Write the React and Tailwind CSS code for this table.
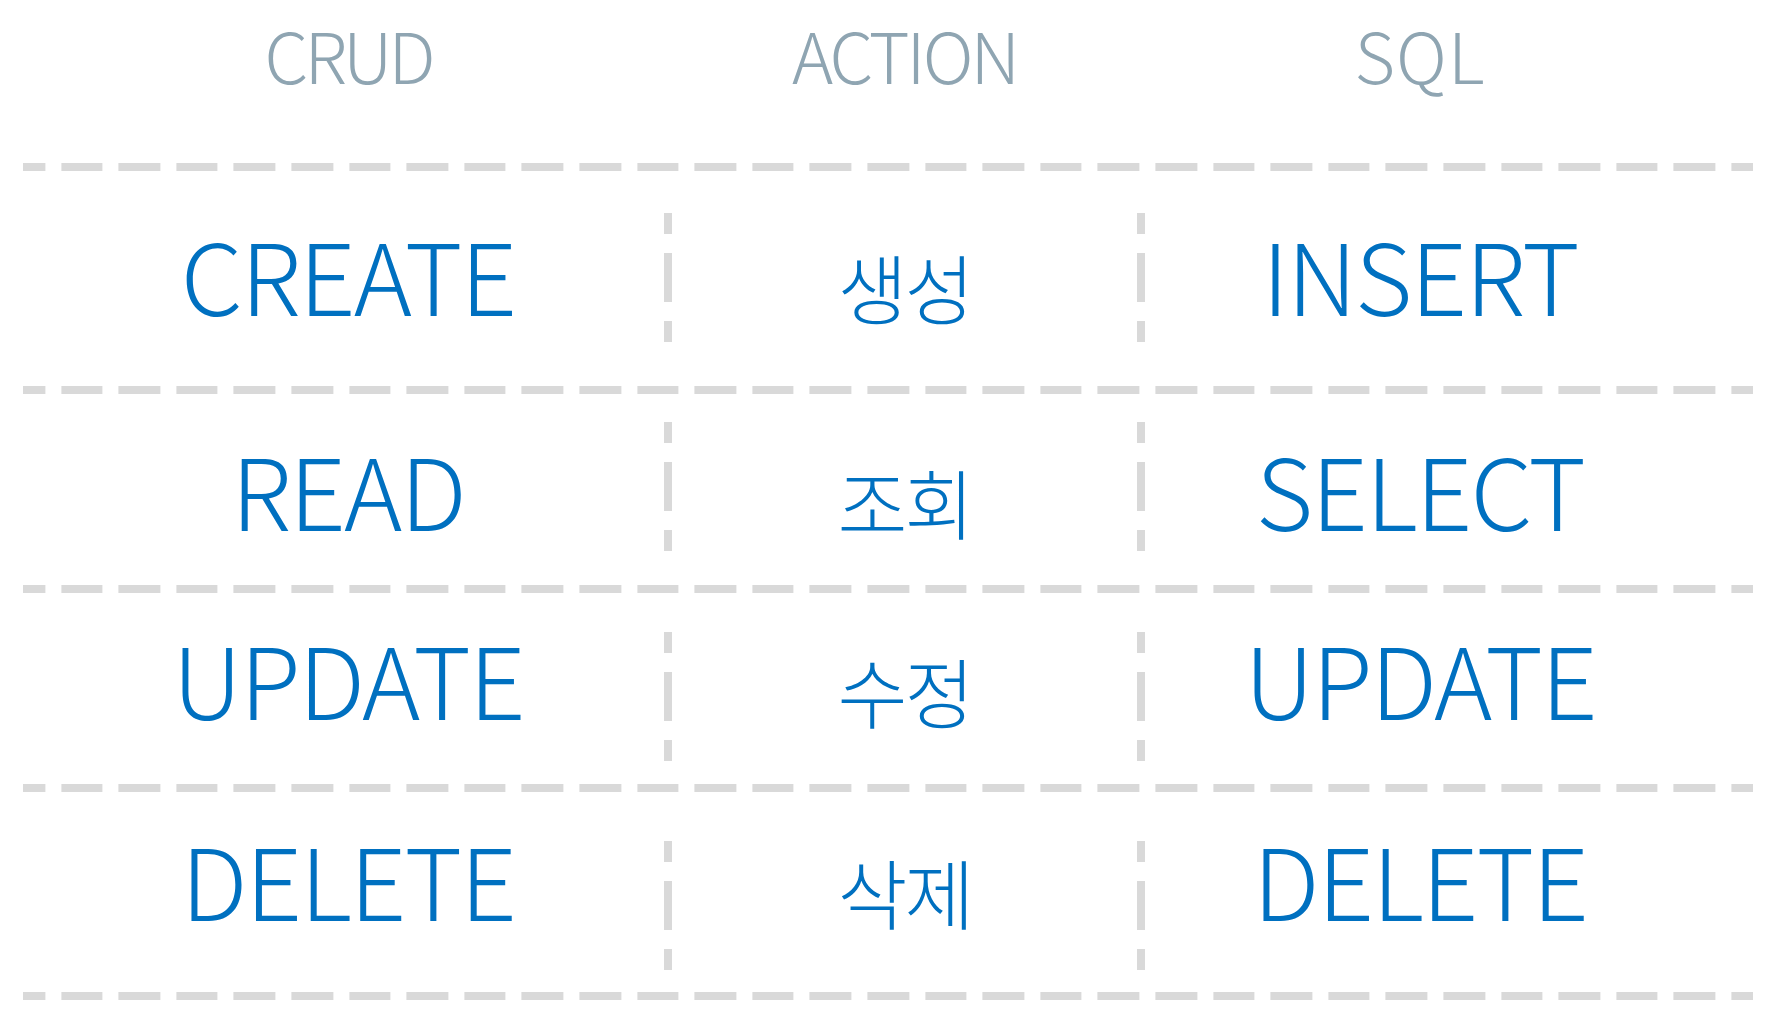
import React from 'react';

const rows = [
  { crud: 'CREATE', action: '생성', sql: 'INSERT', h: 'h-[215px]', pt: 'pt-[53px]', vt: 'mt-[42px]' },
  { crud: 'READ', action: '조회', sql: 'SELECT', h: 'h-[191px]', pt: 'pt-[45px]', vt: 'mt-[28px]' },
  { crud: 'UPDATE', action: '수정', sql: 'UPDATE', h: 'h-[191px]', pt: 'pt-[35px]', vt: 'mt-[39px]' },
  { crud: 'DELETE', action: '삭제', sql: 'DELETE', h: 'h-[200px]', pt: 'pt-[37px]', vt: 'mt-[49px]' },
];

// dashed rule between rows
const Line = () => (
  <div className="h-[8px] w-[1730px] bg-[image:repeating-linear-gradient(90deg,#d9d9d9_0_41.6px,transparent_41.6px_57.6px)] [background-position:-19.6px_0]" />
);

// short / long / short column divider
const Divider = ({ mt }) => (
  <div className={`flex w-[8px] flex-col gap-[19px] ${mt}`}>
    <div className="h-[21px] bg-[#d9d9d9]" />
    <div className="h-[49px] bg-[#d9d9d9]" />
    <div className="h-[21px] bg-[#d9d9d9]" />
  </div>
);

const App = () => {
  return (
    <div className="min-h-screen bg-white pl-[23px] font-['Noto_Sans_CJK_KR','Noto_Sans',sans-serif]">
      {/* Header */}
      <div className="grid h-[163px] grid-cols-[641px_8px_465px_8px_608px] items-start text-[70px] font-light leading-[1.4] text-[#8fa5b2]">
        <div className="pl-[9px] pt-[5px] text-center tracking-[-4px]">CRUD</div>
        <div />
        <div className="pt-[5px] text-center tracking-[-3px]">ACTION</div>
        <div />
        <div className="pr-[58px] pt-[5px] text-center tracking-[1px]">SQL</div>
      </div>
      <Line />

      {rows.map((r) => (
        <div key={r.crud}>
          <div className={`grid grid-cols-[641px_8px_465px_8px_608px] items-start text-[99px] font-light leading-none tracking-[-2px] text-[#0070c0] ${r.h}`}>
            <div className={`pl-[9px] text-center ${r.pt}`}>{r.crud}</div>
            <Divider mt={r.vt} />
            <div className={`text-center ${r.pt}`}>
              <span className="align-[-3px] text-[76px] tracking-[-3px]">{r.action}</span>
            </div>
            <Divider mt={r.vt} />
            <div className={`pr-[58px] text-center ${r.pt}`}>{r.sql}</div>
          </div>
          <Line />
        </div>
      ))}
    </div>
  );
};

export default App;
